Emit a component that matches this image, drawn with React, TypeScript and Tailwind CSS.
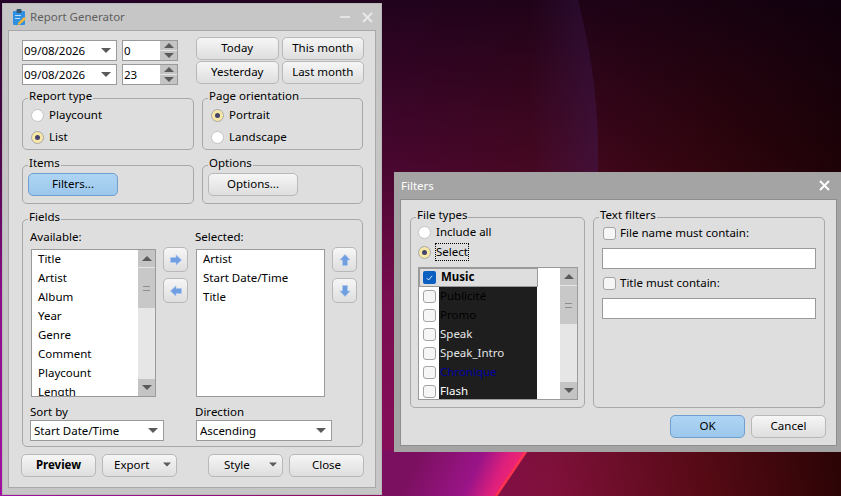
import React from "react";

const Tri = ({ dir = "down", w = 12, h = 6, c = "#5a5a5a" }: { dir?: "up" | "down"; w?: number; h?: number; c?: string }) => (
  <svg width={w} height={h} viewBox="0 0 12 6" className="block shrink-0">
    <path d={dir === "down" ? "M0 0H12L6 6Z" : "M0 6H12L6 0Z"} fill={c} />
  </svg>
);

const Btn = ({ children, className = "", blue = false, bold = false, icon = false }: { children?: React.ReactNode; className?: string; blue?: boolean; bold?: boolean; icon?: boolean }) => (
  <div
    className={`flex items-center rounded-[5px] border ${
      blue
        ? "border-[#6f9fcf] bg-gradient-to-b from-[#aed4f3] to-[#9cc8ec]"
        : "border-[#b8b8b8] bg-gradient-to-b from-[#f6f6f6] to-[#dedede]"
    } ${icon ? "" : "pb-[2px]"} ${bold ? "font-bold" : ""} ${className} ${className.includes("justify-between") ? "" : "justify-center"}`}
  >
    {children}
  </div>
);

const Group = ({ title, className = "", children }: { title: string; className?: string; children?: React.ReactNode }) => (
  <div className={`relative rounded-[5px] border border-[#a8a8a8] ${className}`}>
    <span className="absolute left-[5px] top-[-11px] h-[16px] bg-[#dedede] px-px leading-[16px]">{title}</span>
    {children}
  </div>
);

const Radio = ({ on = false, label, focus = false }: { on?: boolean; label: string; focus?: boolean }) => (
  <div className="flex h-[22px] items-center">
    <div
      className={`flex h-[13px] w-[13px] shrink-0 items-center justify-center rounded-full border ${
        on ? "border-[#a8a8a8] bg-[#f6e7a6]" : "border-[#c4c4c4] bg-white"
      }`}
    >
      {on && <div className="h-[5px] w-[5px] rounded-full bg-[#44446a]" />}
    </div>
    <span className={`ml-[5px] leading-[16px] ${focus ? "outline-1 outline-dotted outline-black" : ""}`}>{label}</span>
  </div>
);

const Combo = ({ text, className = "" }: { text: string; className?: string }) => (
  <div className={`flex h-[21px] items-center justify-between border border-[#9a9a9a] bg-white pr-[5px] ${className}`}>
    <span className="leading-none">{text}</span>
    <Tri w={10} h={5} />
  </div>
);

const Spin = ({ value }: { value: string }) => (
  <div className="flex h-[21px] w-[56px] border border-[#9a9a9a] bg-white">
    <span className="flex-1 pl-px leading-[19px]">{value}</span>
    <div className="flex w-[17px] flex-col gap-px bg-[#e4e4e4]">
      <div className="flex flex-1 items-center justify-center bg-[#c4c4c4]"><Tri dir="up" w={10} h={5} /></div>
      <div className="flex flex-1 items-center justify-center bg-[#c4c4c4]"><Tri w={10} h={5} /></div>
    </div>
  </div>
);

const Scrollbar = ({ thumb }: { thumb: number }) => (
  <div className="flex w-[17px] shrink-0 flex-col bg-[#e6e6e6]">
    <div className="flex h-[17px] items-center justify-center bg-[#c4c4c4]"><Tri dir="up" w={10} h={5} /></div>
    <div className="mt-px flex items-center justify-center bg-[#c8c8c8]" style={{ height: thumb }}>
      <div className="h-[5px] w-[7px] border-y border-[#8e8e8e]" />
    </div>
    <div className="flex-1" />
    <div className="flex h-[17px] items-center justify-center bg-[#c4c4c4]"><Tri w={10} h={5} /></div>
  </div>
);

const Arrow = ({ dir }: { dir: "left" | "right" | "up" | "down" }) => {
  const rot = { right: 0, down: 90, left: 180, up: 270 }[dir];
  return (
    <svg width="12" height="12" viewBox="0 0 12 12" style={{ transform: `rotate(${rot}deg)` }}>
      <path d="M0.5 3.5H6V0.8L11.5 6L6 11.2V8.5H0.5Z" fill="#6f9fe0" stroke="#a9c6ee" strokeWidth="0.6" />
    </svg>
  );
};

const Check = ({ on = false }: { on?: boolean }) =>
  on ? (
    <div className="flex h-[13px] w-[13px] shrink-0 items-center justify-center rounded-[2px] bg-[#0b5fc0]">
      <svg width="7" height="6" viewBox="0 0 7 6"><path d="M0.8 3.2L2.6 5L6.2 0.8" stroke="#dfeaff" strokeWidth="1" fill="none" /></svg>
    </div>
  ) : (
    <div className="h-[13px] w-[13px] shrink-0 rounded-[3px] border border-[#a4a4a4] bg-[#f6f6f6]" />
  );

const Wallpaper = () => (
  <svg className="absolute inset-0" width="841" height="496" viewBox="0 0 841 496">
    <defs>
      <linearGradient id="low" x1="0" y1="0" x2="1" y2="0">
        <stop offset="0" stopColor="#a010a0" />
        <stop offset="0.46" stopColor="#8a0e5c" />
        <stop offset="0.66" stopColor="#80103a" />
        <stop offset="0.84" stopColor="#560a14" />
        <stop offset="1" stopColor="#2c0405" />
      </linearGradient>
      <linearGradient id="dark" x1="0" y1="0" x2="0" y2="1">
        <stop offset="0" stopColor="#0a0010" stopOpacity="0.82" />
        <stop offset="0.35" stopColor="#100008" stopOpacity="0.52" />
        <stop offset="0.6" stopColor="#100008" stopOpacity="0.14" />
        <stop offset="1" stopColor="#100008" stopOpacity="0" />
      </linearGradient>
      <linearGradient id="band" x1="0" y1="0" x2="1" y2="0">
        <stop offset="0" stopColor="#4a2478" stopOpacity="0" />
        <stop offset="1" stopColor="#4a2478" stopOpacity="0.3" />
      </linearGradient>
      <linearGradient id="lobe" gradientUnits="userSpaceOnUse" x1="425" y1="445" x2="510" y2="485">
        <stop offset="0" stopColor="#7c1060" />
        <stop offset="0.6" stopColor="#9a1488" />
        <stop offset="0.86" stopColor="#e0207c" />
        <stop offset="1" stopColor="#ee2672" />
      </linearGradient>
    </defs>
    <rect width="841" height="496" fill="url(#low)" />
    <rect width="841" height="496" fill="url(#dark)" />
    <path d="M578 0Q600 85 598 172H530V0Z" fill="url(#band)" />
    <path d="M380 450H527L496 496H380Z" fill="url(#lobe)" />
    <path d="M527 450L496 496" stroke="#ff3350" strokeWidth="2.5" />
  </svg>
);

const Available = ["Title", "Artist", "Album", "Year", "Genre", "Comment", "Playcount", "Length"];
const Selected = ["Artist", "Start Date/Time", "Title"];
const Types: { t: string; c: string }[] = [
  { t: "Publicité", c: "#000000" },
  { t: "Promo", c: "#000000" },
  { t: "Speak", c: "#e6e6e6" },
  { t: "Speak_Intro", c: "#e6e6e6" },
  { t: "Chronique", c: "#0000a0" },
  { t: "Flash", c: "#ffffff" },
];

export default function App() {
  return (
    <div className="relative h-[496px] w-[841px] overflow-hidden text-[11.5px] text-black [font-family:'Noto_Sans',sans-serif]">
      <Wallpaper />

      {/* Report Generator window */}
      <div className="absolute left-[2px] top-[3px] flex h-[492px] w-[380px] flex-col border border-[#b8b8b8] bg-[#c6c6c6] px-[5px] pb-[6px]">
        <div className="flex h-[26px] shrink-0 items-center pl-[5px] pr-[3px]">
          <svg width="13" height="16" viewBox="0 0 13 16">
            <rect x="0" y="2" width="12" height="14" rx="1" fill="#2f8fe0" />
            <rect x="3.5" y="0" width="5" height="4" rx="1" fill="#33556f" />
            <rect x="2" y="6" width="6" height="1" fill="#bfe0f8" />
            <rect x="2" y="9" width="5" height="1" fill="#bfe0f8" />
            <path d="M5 14L11 8L13 10L7 15.5L5 16Z" fill="#f4b73a" />
          </svg>
          <span className="ml-[4px] flex-1 text-[#5e5e5e]">Report Generator</span>
          <div className="mr-[12px] h-[2px] w-[10px] bg-[#e4e4e4]" />
          <svg width="11" height="11" viewBox="0 0 11 11"><path d="M1 1L10 10M10 1L1 10" stroke="#e8e8e8" strokeWidth="2" /></svg>
        </div>
        <div className="flex min-h-0 flex-1 flex-col border border-[#a8a8a8] bg-[#dedede] pl-[13px] pr-[11px] pt-[6px]">
          {/* dates */}
          <div className="flex h-[47px] justify-between">
            <div className="flex flex-col gap-[3px] pt-[3px]">
              <div className="flex gap-[5px]"><Combo text="09/08/2026" className="w-[95px] pl-px" /><Spin value="0" /></div>
              <div className="flex gap-[5px]"><Combo text="09/08/2026" className="w-[95px] pl-px" /><Spin value="23" /></div>
            </div>
            <div className="grid w-[168px] grid-cols-2 gap-x-[3px] gap-y-px">
              <Btn>Today</Btn>
              <Btn>This month</Btn>
              <Btn>Yesterday</Btn>
              <Btn>Last month</Btn>
            </div>
          </div>
          {/* type */}
          <div className="mt-[14px] flex gap-[8px]">
            <Group title="Report type" className="h-[52px] w-[172px] pl-[8px] pt-[5px]">
              <Radio label="Playcount" />
              <Radio on label="List" />
            </Group>
            <Group title="Page orientation" className="h-[52px] w-[161px] pl-[8px] pt-[5px]">
              <Radio on label="Portrait" />
              <Radio label="Landscape" />
            </Group>
          </div>
          {/* items */}
          <div className="mt-[15px] flex gap-[8px]">
            <Group title="Items" className="h-[39px] w-[172px] pl-[5px] pt-[7px]">
              <Btn blue className="h-[23px] w-[90px]">Filters...</Btn>
            </Group>
            <Group title="Options" className="h-[39px] w-[161px] pl-[5px] pt-[7px]">
              <Btn className="h-[23px] w-[90px]">Options...</Btn>
            </Group>
          </div>
          {/* fields */}
          <Group title="Fields" className="mt-[15px] h-[228px] w-[341px] shrink-0 pl-[7px] pt-[9px]">
            <div className="flex">
              <div className="w-[165px] leading-[16px]">Available:</div>
              <div className="leading-[16px]">Selected:</div>
            </div>
            <div className="mt-[4px] flex h-[148px]">
              <div className="ml-px flex w-[125px] overflow-hidden border border-[#9a9a9a] bg-white">
                <div className="flex-1 overflow-hidden pl-[6px]">
                  {Available.map((a) => <div key={a} className="h-[19px] leading-[17px]">{a}</div>)}
                </div>
                <Scrollbar thumb={40} />
              </div>
              <div className="ml-[7px] flex w-[25px] flex-col gap-[6px]">
                <Btn icon className="-mt-[2px] h-[25px]"><Arrow dir="right" /></Btn>
                <Btn icon className="h-[25px]"><Arrow dir="left" /></Btn>
              </div>
              <div className="ml-[8px] w-[129px] border border-[#9a9a9a] bg-white pl-[6px]">
                {Selected.map((a) => <div key={a} className="h-[19px] leading-[17px]">{a}</div>)}
              </div>
              <div className="ml-[7px] flex w-[25px] flex-col gap-[6px]">
                <Btn icon className="-mt-[2px] h-[25px]"><Arrow dir="up" /></Btn>
                <Btn icon className="h-[25px]"><Arrow dir="down" /></Btn>
              </div>
            </div>
            <div className="mt-[7px] flex">
              <div className="w-[165px] leading-[16px]">Sort by</div>
              <div className="leading-[16px]">Direction</div>
            </div>
            <div className="flex gap-[32px]">
              <Combo text="Start Date/Time" className="w-[134px] pl-[3px]" />
              <Combo text="Ascending" className="w-[136px] pl-[3px]" />
            </div>
          </Group>
          {/* bottom */}
          <div className="-ml-px mt-[7px] flex w-[343px] justify-between">
            <div className="flex gap-[6px]">
              <Btn bold className="h-[23px] w-[75px]">Preview</Btn>
              <Btn className="h-[23px] w-[75px] justify-between pl-[11px] pr-[5px]">Export<Tri w={8} h={5} /></Btn>
            </div>
            <div className="flex gap-[6px]">
              <Btn className="h-[23px] w-[75px] justify-between pl-[15px] pr-[5px]">Style<Tri w={8} h={5} /></Btn>
              <Btn className="h-[23px] w-[75px]">Close</Btn>
            </div>
          </div>
        </div>
      </div>

      {/* Filters window */}
      <div className="absolute left-[394px] top-[172px] flex h-[280px] w-[447px] flex-col bg-[#a4a4a4] pb-[6px] pl-[6px] pr-[4px]">
        <div className="flex h-[27px] shrink-0 items-center pl-px pr-[7px] text-white">
          <span className="flex-1">Filters</span>
          <svg width="11" height="11" viewBox="0 0 11 11"><path d="M1 1L10 10M10 1L1 10" stroke="#ffffff" strokeWidth="2" /></svg>
        </div>
        <div className="flex min-h-0 flex-1 flex-col border border-[#8e8e8e] bg-[#dedede] pl-[9px] pt-[17px]">
          <div className="flex gap-[8px]">
            <Group title="File types" className="h-[191px] w-[175px] pl-[7px] pt-[4px]">
              <div className="flex h-[20px] items-center"><Radio label="Include all" /></div>
              <div className="flex h-[20px] items-center"><Radio on focus label="Select" /></div>
              <div className="mt-[5px] flex h-[133px] w-[160px] overflow-hidden border border-[#9a9a9a] bg-white">
                <div className="flex-1 overflow-hidden">
                  <div className="flex h-[19px] w-[119px] items-center border border-[#9a9a9a] bg-[#dedede] pl-[3px] font-bold">
                    <Check on />
                    <span className="ml-[5px] -translate-y-px">Music</span>
                  </div>
                  {Types.map((t) => (
                    <div key={t.t} className="flex h-[19px] items-center pl-[4px]">
                      <Check />
                      <span className="ml-[3px] h-[19px] w-[98px] bg-[#1e1e1e] pl-px leading-[17px]" style={{ color: t.c }}>{t.t}</span>
                    </div>
                  ))}
                </div>
                <Scrollbar thumb={38} />
              </div>
            </Group>
            <Group title="Text filters" className="h-[191px] w-[232px] pl-[8px] pr-[8px] pt-[6px]">
              <div className="flex h-[18px] items-center pl-px"><Check /><span className="ml-[4px]">File name must contain:</span></div>
              <div className="mt-[6px] h-[21px] border border-[#9a9a9a] bg-white" />
              <div className="mt-[5px] flex h-[18px] items-center pl-px"><Check /><span className="ml-[4px]">Title must contain:</span></div>
              <div className="mt-[6px] h-[21px] border border-[#9a9a9a] bg-white" />
            </Group>
          </div>
          <div className="mt-[7px] flex w-[416px] justify-end gap-[6px]">
            <Btn blue className="h-[23px] w-[75px]">OK</Btn>
            <Btn className="h-[23px] w-[75px]">Cancel</Btn>
          </div>
        </div>
      </div>
    </div>
  );
}
